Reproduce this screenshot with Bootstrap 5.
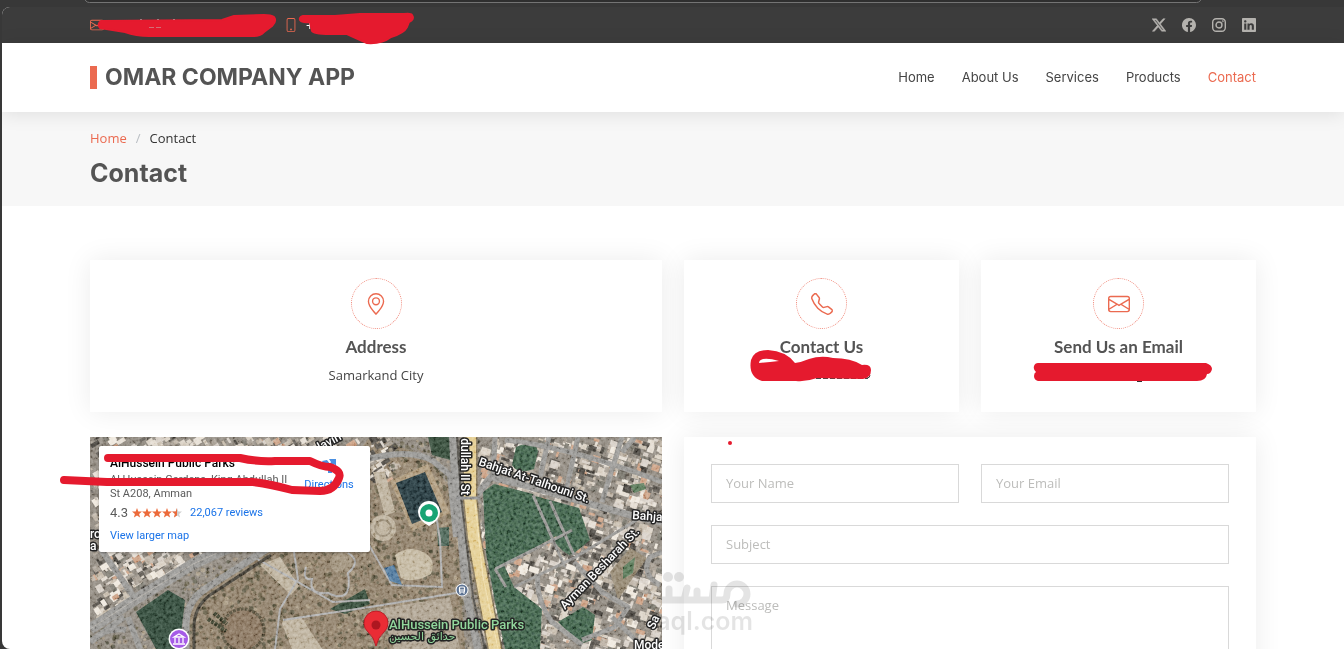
<!DOCTYPE html>
<html lang="en">
<head>
<meta charset="utf-8">
<meta name="viewport" content="width=device-width, initial-scale=1">
<title>Omar Company App - Contact</title>
<link href="https://cdn.jsdelivr.net/npm/bootstrap@5.3.0/dist/css/bootstrap.min.css" rel="stylesheet">
<style>
:root{--accent:#eb6a50;--ink:#444;--title:#545454;--paint:#e51a2e}
body{background:#383838;color:var(--ink);font:13px/20px "Open Sans",sans-serif}
a{color:var(--accent);text-decoration:none}
.strip{height:7px;flex:none;overflow:hidden}
.omnibox{height:11px;margin:-8px 142px 0 84px;background:#2f2f2f;border:1px solid #747474;border-radius:8px}
.viewport{margin-left:2px;border-radius:8px 0 0 8px;background:#fff;min-height:0}
.container{max-width:1188px;--bs-gutter-x:22px}
.topbar{background:#3c3c3c;height:36px;color:#fff}
.topbar .social{color:#b4b2ae;width:14px;height:14px;display:flex}
.topbar svg.ic{width:14px;height:14px}
.phone-item{margin-left:180px}
.site-head{height:69px;background:#fff;box-shadow:0 2px 18px rgba(0,0,0,.1);z-index:2}
.brand{font:700 23px/23px Inter,sans-serif;color:var(--title);border-left:7px solid var(--accent);padding-left:8px}
.menu .nav-link{font:400 13px/20px Inter,sans-serif;color:var(--ink);padding:0 0 2px}
.menu{gap:27px}
.menu .nav-link.active{color:var(--accent)}
.crumbs{background:#f7f7f7;height:94px;padding-top:16px}
.breadcrumb{--bs-breadcrumb-item-padding-x:9px;--bs-breadcrumb-divider-color:#b9bec3;--bs-breadcrumb-item-active-color:#333;font-size:13px}
.crumbs h1{font:700 25px/34px Inter,sans-serif;color:var(--title)}
.contact{padding-top:54px}
.contact .row{--bs-gutter-x:22px}
.contact .deck{--bs-gutter-y:25px}
.panel{background:#fff;box-shadow:0 0 26px rgba(0,0,0,.08)}
.info{height:152px;padding-top:18px}
.ring{width:51px;height:51px;border:1px dotted #f0897b;color:var(--accent)}
.ring svg{width:22px;height:22px}
.info h2{font:700 17px/20px Lato,sans-serif;color:var(--title)}
.paint{position:absolute;pointer-events:none;overflow:visible;fill:var(--paint);stroke:var(--paint);z-index:3}
.form-panel{padding:27px;height:400px}
.form-panel .row{--bs-gutter-y:22px}
.form-control,.form-control:focus{border:1px solid #d9d9d9;border-radius:0;font-size:13px;line-height:20px;padding:8px 14px 9px;box-shadow:none}
.form-control::placeholder{color:#bdbdbb}
textarea.form-control{height:160px}
.map{height:345px;overflow:hidden;background:#857d72}
.map>svg{position:absolute;left:0;top:0;width:100%;height:345px}
.map svg text{font-family:Roboto,sans-serif}
.place{position:absolute;left:9px;top:9px;width:271px;height:106px;background:#fff;border-radius:2px;box-shadow:0 1px 3px rgba(0,0,0,.3);padding:10px 11px;font:11px/14px Roboto,sans-serif;color:#5b5b5b}
.place a{color:#1a73e8}
.place h3{font:500 12px/14px Roboto,sans-serif;color:#000}
.place .addr{width:180px;padding-top:3px}
.place .score{font-size:13px;line-height:16px}
.dir{position:absolute;right:16px;top:10px;width:50px;text-align:center}
.logo-mark{position:absolute;left:-22px;top:130px;width:92px;height:82px;pointer-events:none;opacity:.1}
.red-dot{position:absolute;left:44px;top:4px;width:4px;height:4px;background:var(--paint)}
</style>
</head>
<body class="vh-100 overflow-hidden d-flex flex-column">
<div class="strip"><div class="omnibox"></div></div>
<div class="viewport flex-grow-1 overflow-hidden">
<div class="topbar d-flex align-items-center">
  <div class="container position-relative d-flex justify-content-between align-items-center">
    <div class="d-flex align-items-center">
      <svg class="ic" viewBox="0 0 16 16" fill="#eb6a50"><path d="M0 4a2 2 0 0 1 2-2h12a2 2 0 0 1 2 2v8a2 2 0 0 1-2 2H2a2 2 0 0 1-2-2V4Zm2-1a1 1 0 0 0-1 1v.217l7 4.2 7-4.2V4a1 1 0 0 0-1-1H2Zm13 2.383-4.708 2.825L15 11.105V5.383Zm-.034 6.876-5.64-3.471L8 9.583l-1.326-.795-5.64 3.47A1 1 0 0 0 2 13h12a1 1 0 0 0 .966-.741ZM1 11.105l4.708-2.897L1 5.383v5.722Z"/></svg>
      <svg class="ic phone-item" viewBox="0 0 16 16" fill="#eb6a50"><path d="M11 1a1 1 0 0 1 1 1v12a1 1 0 0 1-1 1H5a1 1 0 0 1-1-1V2a1 1 0 0 1 1-1h6zM5 0a2 2 0 0 0-2 2v12a2 2 0 0 0 2 2h6a2 2 0 0 0 2-2V2a2 2 0 0 0-2-2H5z"/><path d="M8 14a1 1 0 1 0 0-2 1 1 0 0 0 0 2z"/></svg>
      <span class="ms-2">+</span>
    </div>
    <svg class="paint" style="left:0;top:0" width="340" height="20" viewBox="79 15 340 20" stroke-linejoin="round"><path stroke-width="2" d="M101 21 Q97 24 100 28 L125 32 Q136 36 149 36 L254 36 Q260 36 264 32 L272 26 Q277 21 274 17 Q271 15 264 15 L234 16 L222 20Z"/><path stroke-width="2" d="M303 16 Q299 17 300 20 Q302 23 310 22 L312 31 Q313 34 330 34 L347 34 Q360 40 367 43 Q382 44 391 37 Q404 33 407 27 L409 22 Q415 19 412 15 Q411 13 404 14 L360 14 L335 16Z"/><path fill="none" stroke="#c8a8a8" stroke-width="1" opacity=".6" d="M149 27.500h5M156 27.500h5M140 19.500h2M157 19.500h2M173 19.500h2"/></svg>
    <div class="d-flex">
      <a class="social" href="#" aria-label="X"><svg class="ic" viewBox="0 0 16 16" fill="currentColor"><path stroke="currentColor" stroke-width=".5" d="M12.600.75h2.454l-5.360 6.142L16 15.250h-4.937l-3.867-5.070-4.425 5.070H.316l5.733-6.570L0 .75h5.063l3.495 4.633L12.601.750Zm-.860 13.028h1.360L4.323 2.145H2.865z"/></svg></a>
      <a class="social mx-3" href="#" aria-label="Facebook"><svg class="ic" viewBox="0 0 16 16" fill="currentColor"><path d="M16 8.049c0-4.446-3.582-8.050-8-8.050C3.580 0-.002 3.603-.002 8.050c0 4.017 2.926 7.347 6.750 7.951v-5.625h-2.030V8.050H6.750V6.275c0-2.017 1.195-3.131 3.022-3.131.876 0 1.791.157 1.791.157v1.980h-1.009c-.993 0-1.303.621-1.303 1.258v1.510h2.218l-.354 2.326H9.250V16c3.824-.604 6.750-3.934 6.750-7.951z"/></svg></a>
      <a class="social" href="#" aria-label="Instagram"><svg class="ic" viewBox="0 0 16 16" fill="none" stroke="currentColor" stroke-width="1.600"><rect x=".8" y=".8" width="14.400" height="14.400" rx="4"/><circle cx="8" cy="8" r="3.400"/><circle cx="12.300" cy="3.700" r=".3"/></svg></a>
      <a class="social ms-3" href="#" aria-label="LinkedIn"><svg class="ic" viewBox="0 0 16 16" fill="currentColor"><path d="M0 1.146C0 .513.526 0 1.175 0h13.650C15.474 0 16 .513 16 1.146v13.708c0 .633-.526 1.146-1.175 1.146H1.175C.526 16 0 15.487 0 14.854V1.146zm4.943 12.248V6.169H2.542v7.225h2.401zm-1.200-8.212c.837 0 1.358-.554 1.358-1.248-.015-.709-.520-1.248-1.342-1.248-.822 0-1.359.540-1.359 1.248 0 .694.521 1.248 1.327 1.248h.016zm4.908 8.212V9.359c0-.216.016-.432.080-.586.173-.431.568-.878 1.232-.878.869 0 1.216.662 1.216 1.634v3.865h2.401V9.250c0-2.220-1.184-3.252-2.764-3.252-1.274 0-1.845.700-2.165 1.193v.025h-.016a5.540 5.540 0 0 1 .016-.025V6.169h-2.400c.030.678 0 7.225 0 7.225h2.400z"/></svg></a>
    </div>
  </div>
</div>
<header class="site-head position-relative d-flex align-items-center">
  <div class="container d-flex justify-content-between align-items-center">
    <a class="brand" href="#">OMAR COMPANY APP</a>
    <nav class="nav menu">
      <a class="nav-link" href="#">Home</a><a class="nav-link" href="#">About Us</a><a class="nav-link" href="#">Services</a><a class="nav-link" href="#">Products</a><a class="nav-link active" href="#">Contact</a>
    </nav>
  </div>
</header>
<section class="crumbs">
  <div class="container">
    <ol class="breadcrumb mb-2"><li class="breadcrumb-item"><a href="#">Home</a></li><li class="breadcrumb-item active">Contact</li></ol>
    <h1 class="m-0">Contact</h1>
  </div>
</section>
<main class="contact">
<div class="container">
<div class="row deck">
  <div class="col-6"><div class="panel info text-center">
    <div class="ring rounded-circle mx-auto d-flex align-items-center justify-content-center"><svg viewBox="0 0 16 16" fill="currentColor"><path d="M12.166 8.940c-.524 1.062-1.234 2.120-1.960 3.070A31.493 31.493 0 0 1 8 14.580a31.481 31.481 0 0 1-2.206-2.570c-.726-.950-1.436-2.008-1.960-3.070C3.304 7.867 3 6.862 3 6a5 5 0 0 1 10 0c0 .862-.305 1.867-.834 2.940zM8 16s6-5.686 6-10A6 6 0 0 0 2 6c0 4.314 6 10 6 10z"/><path d="M8 8a2 2 0 1 1 0-4 2 2 0 0 1 0 4zm0 1a3 3 0 1 0 0-6 3 3 0 0 0 0 6z"/></svg></div>
    <h2 class="mt-2 mb-2">Address</h2><p class="m-0">Samarkand City</p>
  </div></div>
  <div class="col-3"><div class="panel info text-center position-relative">
    <div class="ring rounded-circle mx-auto d-flex align-items-center justify-content-center"><svg viewBox="0 0 16 16" fill="currentColor"><path d="M3.654 1.328a.678.678 0 0 0-1.015-.063L1.605 2.300c-.483.484-.661 1.169-.450 1.770a17.568 17.568 0 0 0 4.168 6.608 17.569 17.569 0 0 0 6.608 4.168c.601.211 1.286.033 1.770-.450l1.034-1.034a.678.678 0 0 0-.063-1.015l-2.307-1.794a.678.678 0 0 0-.580-.122l-2.190.547a1.745 1.745 0 0 1-1.657-.459L5.482 8.062a1.745 1.745 0 0 1-.460-1.657l.548-2.190a.678.678 0 0 0-.122-.580L3.654 1.328zM1.884.511a1.745 1.745 0 0 1 2.612.163L6.290 2.980c.329.423.445.974.315 1.494l-.547 2.190a.678.678 0 0 0 .178.643l2.457 2.457a.678.678 0 0 0 .644.178l2.189-.547a1.745 1.745 0 0 1 1.494.315l2.306 1.794c.829.645.905 1.870.163 2.611l-1.034 1.034c-.740.740-1.846 1.065-2.877.702a18.634 18.634 0 0 1-7.010-4.420 18.634 18.634 0 0 1-4.420-7.009c-.362-1.030-.037-2.137.703-2.877L1.885.511z"/></svg></div>
    <h2 class="mt-2 mb-2">Contact Us</h2>
    <svg class="paint" style="left:50%;top:90px" width="1" height="1" viewBox="822 350 1 1"><path fill="none" stroke="#444" stroke-dasharray="5 2" d="M816 378.500h52M867 378q3 0 3-3"/><path fill-rule="evenodd" stroke="none" d="M751 360 Q754 350 768 350 Q786 351 795 363 Q802 362 809 359 Q821 355 833 358 Q851 358 862 365 Q871 364 871 370 Q871 378 863 379 L817 378 Q806 382 796 381 L762 381 Q748 377 751 360ZM759 363 L770 362 L779 361 Q769 358 763 359 Q759 360 759 363Z"/></svg>
  </div></div>
  <div class="col-3"><div class="panel info text-center position-relative">
    <div class="ring rounded-circle mx-auto d-flex align-items-center justify-content-center"><svg viewBox="0 0 16 16" fill="currentColor"><path d="M0 4a2 2 0 0 1 2-2h12a2 2 0 0 1 2 2v8a2 2 0 0 1-2 2H2a2 2 0 0 1-2-2V4Zm2-1a1 1 0 0 0-1 1v.217l7 4.200 7-4.200V4a1 1 0 0 0-1-1H2Zm13 2.383-4.708 2.825L15 11.105V5.383Zm-.034 6.876-5.640-3.471L8 9.583l-1.326-.795-5.640 3.470A1 1 0 0 0 2 13h12a1 1 0 0 0 .966-.741ZM1 11.105l4.708-2.897L1 5.383v5.722Z"/></svg></div>
    <h2 class="mt-2 mb-2">Send Us an Email</h2>
    <svg class="paint" style="left:50%;top:90px" width="1" height="1" viewBox="1119 350 1 1"><path fill="none" stroke="#333" d="M1137 381.500h5"/><path stroke="none" d="M1038 363 L1206 363 Q1212 365 1212 369 Q1211 374 1207 374 Q1206 381 1197 381 L1038 381 Q1034 380 1034 376 Q1034 373 1036 372 Q1033 369 1034 366 Q1035 363 1038 363Z"/></svg>
  </div></div>
  <div class="col-6"><div class="position-relative">
    <div class="map position-relative">
    <svg viewBox="0 0 572 345" preserveAspectRatio="xMinYMin slice">
      <defs>
        <filter id="grain" x="0" y="0" width="100%" height="100%"><feTurbulence type="fractalNoise" baseFrequency=".3" numOctaves="3" seed="4"/><feColorMatrix values="1.800 0 0 0 -.4 1.800 0 0 0 -.4 1.800 0 0 0 -.4 0 0 0 0 1"/></filter>
        <pattern id="trees" width="6" height="6" patternUnits="userSpaceOnUse" patternTransform="rotate(18)"><rect width="6" height="6" fill="#41634a"/><circle cx="2" cy="2" r="1.500" fill="#2b4838"/><circle cx="5" cy="5" r="1" fill="#35533e"/></pattern>
      </defs>
      <rect width="572" height="345" fill="#8a8379"/>
      <path fill="#8b7b65" d="M90 212L100 166L140 135L185 112L280 0L340 20L365 60L375 212V345H90Z"/>
      <g id="houses"></g>
      <g id="bushes"></g>
      <path fill="#2f4637" d="M46 175L78 153L95 163L92 190L85 212H66Z"/>
      <path fill="#314635" d="M338 0h24l2 24l-22-6zM240 172l35-20l5 15l-25 10z"/>
      <path fill="url(#trees)" d="M393 55L404 47L443 57L470 97L414 128L424 150L452 172L450 212H415L405 165L396 115Z"/>
      <path fill="url(#trees)" d="M445 59L489 71L500 103L482 118L460 92zM462 103l10-4l9 20l-8-5zM426 10q18-8 22 4l-4 18q-16 6-22-4zM468 185l25-15l12 8l-3 25l-12 4z"/>
      <path fill="#557454" d="M540 48l14-2l2 6l-12 4z"/>
      <path fill="#8f826c" d="M520 135l20-24l17 10l-20 28l-9 14z"/><path fill="#557454" d="M533 130l12-10l-2 16l-10 6z"/>
      <path fill="#a99577" d="M300 44L338 27L360 76L322 94z"/><path fill="#24363b" d="M306 46L335 35L352 75L322 87z"/><path fill="#496153" d="M347 91l12-1v19h-11z"/>
      <g fill="#b9ad98"><circle cx="293" cy="91" r="13"/><path d="M283 35l12 0l10 40l-10 4zM170 128l20-8l19 29l-8 9zM191 184l20-4l30 45h-34z"/><circle cx="251" cy="125" r="11" fill="#9b8d77"/><path fill="#aa9e8c" d="M290 172l70-12l10 52h-66z"/><path fill="#c0b49c" d="M305 118q14-10 28-3t8 22q-18 10-30 4z"/></g>
      <g fill="none" stroke="#92856f"><circle cx="293" cy="91" r="8" stroke-width="2"/><circle cx="153" cy="193" r="21" fill="#84705a" stroke="#514a37" stroke-width="3" stroke-dasharray="3 1"/><path stroke="#373b29" stroke-width="4" stroke-dasharray="3 1" d="M118 182l18 12M124 176l13 11"/><path stroke="#aaa" stroke-width="2" d="M216 130q-4 14 6 12q-4 16 16 14q25 12 20-20q14-12 0-20M164 120L243 165L280 163M193 183L280 170L372 155M204 115L208 142L190 172L185 212M279 108L302 148L352 150L350 103L346 78"/></g>
      <path fill="#4b7398" d="M294 131l10-3l8 20l-12-4z"/>
      <g fill="none" stroke="#92918e" stroke-linejoin="round">
        <path stroke-width="11" d="M0 192L43 164L103 127L140 110"/><path stroke="#aaa69f" stroke-width="1" d="M0 192L43 164L103 127L140 110"/>
        <path stroke-width="7" d="M96 212V188Q96 165 115 152L177 112"/><path stroke="#403c33" stroke-width="3" d="M104 212V190Q104 170 120 158L181 118"/>
        <path stroke-width="6" d="M0 205L34 180M38 180l12 32M10 111l34 49M14 195q14-4 22-2"/>
        <path stroke-width="6" d="M270 24Q320 10 343 24L360 38L366 100"/>
        <path stroke-width="8" d="M363 0L365 40L371 95L377 160L388 212"/><path stroke="#4e4b45" stroke-width="2" d="M367 0L371 60L377 110L383 160L395 212"/>
        <path stroke-width="7" d="M385 60L401 40L430 47L497 66L540 78L572 85"/>
        <path stroke-width="5" d="M403 40L405 0M450 40L459 0M415 3Q480 10 572 45M475 58L488 0M512 65L532 0M532 15L545 0M448 137Q445 160 461 184L492 208M484 125L512 155L538 170L525 190L492 203M572 115L560 120Q550 137 570 148M522 180L550 207"/>
        <path stroke-width="3" d="M405 132L475 97L482 93M424 150L484 121L555 78M443 58L475 130M460 64L484 118M405 132l11 18"/>
      </g>
      <path fill="none" stroke="#7d6e52" stroke-width="15" d="M380 0L380 60L384 100L397 170L405 212L415 260"/>
      <path fill="none" stroke="#e2cb8e" stroke-width="12" d="M380 0L380 60L384 100L397 170L405 212L415 260"/><path fill="none" stroke="#f0dfae" d="M385 66L393 140L408 212"/>
      <path stroke="#888" stroke-width="3" d="M366 61h24"/>
      <rect width="572" height="345" filter="url(#grain)" opacity=".6" style="mix-blend-mode:soft-light"/>
      <g fill="#fff" stroke="#252525" stroke-width="3" paint-order="stroke" stroke-linejoin="round" font-size="12" font-weight="500">
        <text transform="translate(371 58) rotate(90)" text-anchor="end">dullah II St</text>
        <text transform="translate(388 28) rotate(19)">Bahjat At-Talhouni St.</text>
        <text transform="translate(475 173) rotate(-46)">Ayman Besharah St.</text>
        <text transform="translate(542 82) rotate(4)">Bahja</text><text x="544" y="212">Mode</text><text transform="translate(564 193) rotate(-65)">Sa</text>
        <text x="0" y="101">ro</text><text x="0" y="113">a</text><text transform="translate(230 14) rotate(-28)">layin</text>
        <text x="299" y="192" font-size="13" fill="#92d79c">AlHussein Public Parks</text><text x="299" y="203" font-size="11" fill="#92d79c" style="font-family:'DejaVu Sans',sans-serif">حدائق الحسين</text>
      </g>
      <g><path fill="#fff" d="M339 89q-11-6-11-14a11 11 0 0 1 22 0q0 8-11 14"/><circle cx="339" cy="76" r="9" fill="#18a474"/><circle cx="339" cy="76" r="3.500" fill="#fff"/>
      <path fill="#ea2c35" stroke="#bd1f29" d="M286 209Q284 200 278 195A12 12 0 1 1 294 195Q288 200 286 209Z"/><circle cx="286" cy="188" r="4.500" fill="#ad1720"/>
      <circle cx="89" cy="202" r="10.500" fill="#fff"/><circle cx="89" cy="202" r="9" fill="#a55be7"/><path fill="none" stroke="#fff" stroke-width="1.300" d="M84 200l5-3l5 3zM85 201v5M89 201v5M93 201v5M83 207h12"/>
      <circle cx="372" cy="153" r="6.500" fill="#fff"/><circle cx="372" cy="153" r="5.500" fill="#5d7392"/><rect x="369.500" y="150" width="5" height="5" rx="1" fill="none" stroke="#fff" stroke-width="1.200"/><path stroke="#fff" d="M370 153h4M370 157v-2M374 157v-2"/></g>
    </svg>
    <div class="place">
      <h3 class="m-0">AlHussein Public Parks</h3>
      <p class="addr m-0">Al Hussein Gardens, King Abdullah II St A208, Amman</p>
      <div class="d-flex align-items-center mt-1"><span class="score">4.3</span>
        <svg class="ms-1" width="50" height="10" viewBox="0 0 50 10"><defs><path id="star" d="M5 0l1.300 3.400 3.700.2-2.900 2.300 1 3.700L5 7.500 1.900 9.600l1-3.700L0 3.600l3.700-.2z"/></defs><g fill="#ec6a3a"><use href="#star"/><use href="#star" x="10"/><use href="#star" x="20"/><use href="#star" x="30"/></g><use href="#star" x="40" fill="#cfcfcf"/><path fill="#ec6a3a" d="M45 0v7.500l-3.100 2.100 1-3.700L40 3.600l3.700-.2z"/></svg>
        <a class="ms-2" href="#">22,067 reviews</a></div>
      <a class="d-block mt-2" href="#">View larger map</a>
      <a class="dir" href="#"><svg class="d-block mx-auto mb-1" width="16" height="18" viewBox="0 0 16 18"><path fill="#4a90e2" d="M1 5l5-1 3 4-1 3-4-1zM8 3h7v7l-2-2-2 3v6H7V11l3-5z"/></svg>Directions</a>
    </div>
    </div>
    <svg class="paint" style="left:0;top:0" width="1" height="1" viewBox="90 437 1 1"><path fill="none" stroke-width="8" stroke-linecap="round" stroke-linejoin="round" d="M108 458L240 458Q258 462 275 461L310 461Q322 467 330 467Q342 471 339 478Q334 491 320 491L292 490Q270 484 253 482L107 482L64 480"/></svg>
  </div></div>
  <div class="col-6"><div class="panel form-panel position-relative">
    <span class="red-dot rounded-circle"></span>
    <svg class="logo-mark" viewBox="662 567 92 82"><circle cx="668" cy="577" r="5"/><circle cx="679" cy="577" r="5"/><path fill="none" stroke="#000" stroke-width="7" stroke-linejoin="round" stroke-linecap="round" d="M655 600H722Q727 600 727 594A10 10 0 1 1 737 604M669 600V589M684 600L687 588M697 600V591M712 600L714 585"/><text x="753" y="630" text-anchor="end" font-family="Inter,sans-serif" font-size="25" font-weight="600">aql.com</text></svg>
    <form class="row">
      <div class="col-6"><input class="form-control" type="text" placeholder="Your Name" aria-label="Your Name"></div>
      <div class="col-6"><input class="form-control" type="email" placeholder="Your Email" aria-label="Your Email"></div>
      <div class="col-12"><input class="form-control" type="text" placeholder="Subject" aria-label="Subject"></div>
      <div class="col-12"><textarea class="form-control bg-transparent" placeholder="Message" aria-label="Message"></textarea></div>
    </form>
  </div></div>
</div>
</div>
</main>
</div>
<script src="https://cdn.jsdelivr.net/npm/bootstrap@5.3.0/dist/js/bootstrap.bundle.min.js"></script>
<script>
// Scatter the rooftops and shrubs of the aerial view with a seeded generator.
let seed = 11;
const rnd = () => (seed = (seed * 16807) % 2147483647) / 2147483647;
const roofs = ['#d8cfc2', '#c4b9a9', '#eee7dc', '#a39a8e', '#b9aea0', '#5a554e', '#47433d', '#c99d80', '#77746a', '#d5cdc4', '#e3dbd0'];
let houses = '', bushes = '';
for (let i = 0; i < 4200; i++) {
  const x = rnd() * 572, y = rnd() * 225;
  const town = x > 390 || y < 45 && x < 300 || x < 150 && y < 190 - x * 0.6;
  const w = 2 + rnd() * 8, h = 2 + rnd() * 6, pick = roofs[Math.floor(rnd() * roofs.length)];
  if (town) houses += `<rect x="${x}" y="${y}" width="${w}" height="${h}" fill="${pick}" transform="rotate(${x > 390 ? 18 : -32} ${x} ${y})"/>`;
  else bushes += `<circle cx="${x}" cy="${y}" r="${w / 4}" fill="${['#46442f', '#5b553c', '#a08e74', '#b5a68c', '#40412f'][i % 5]}" opacity=".6"/>`;
}
document.getElementById('houses').innerHTML = houses;
document.getElementById('bushes').innerHTML = bushes;
</script>
</body>
</html>
